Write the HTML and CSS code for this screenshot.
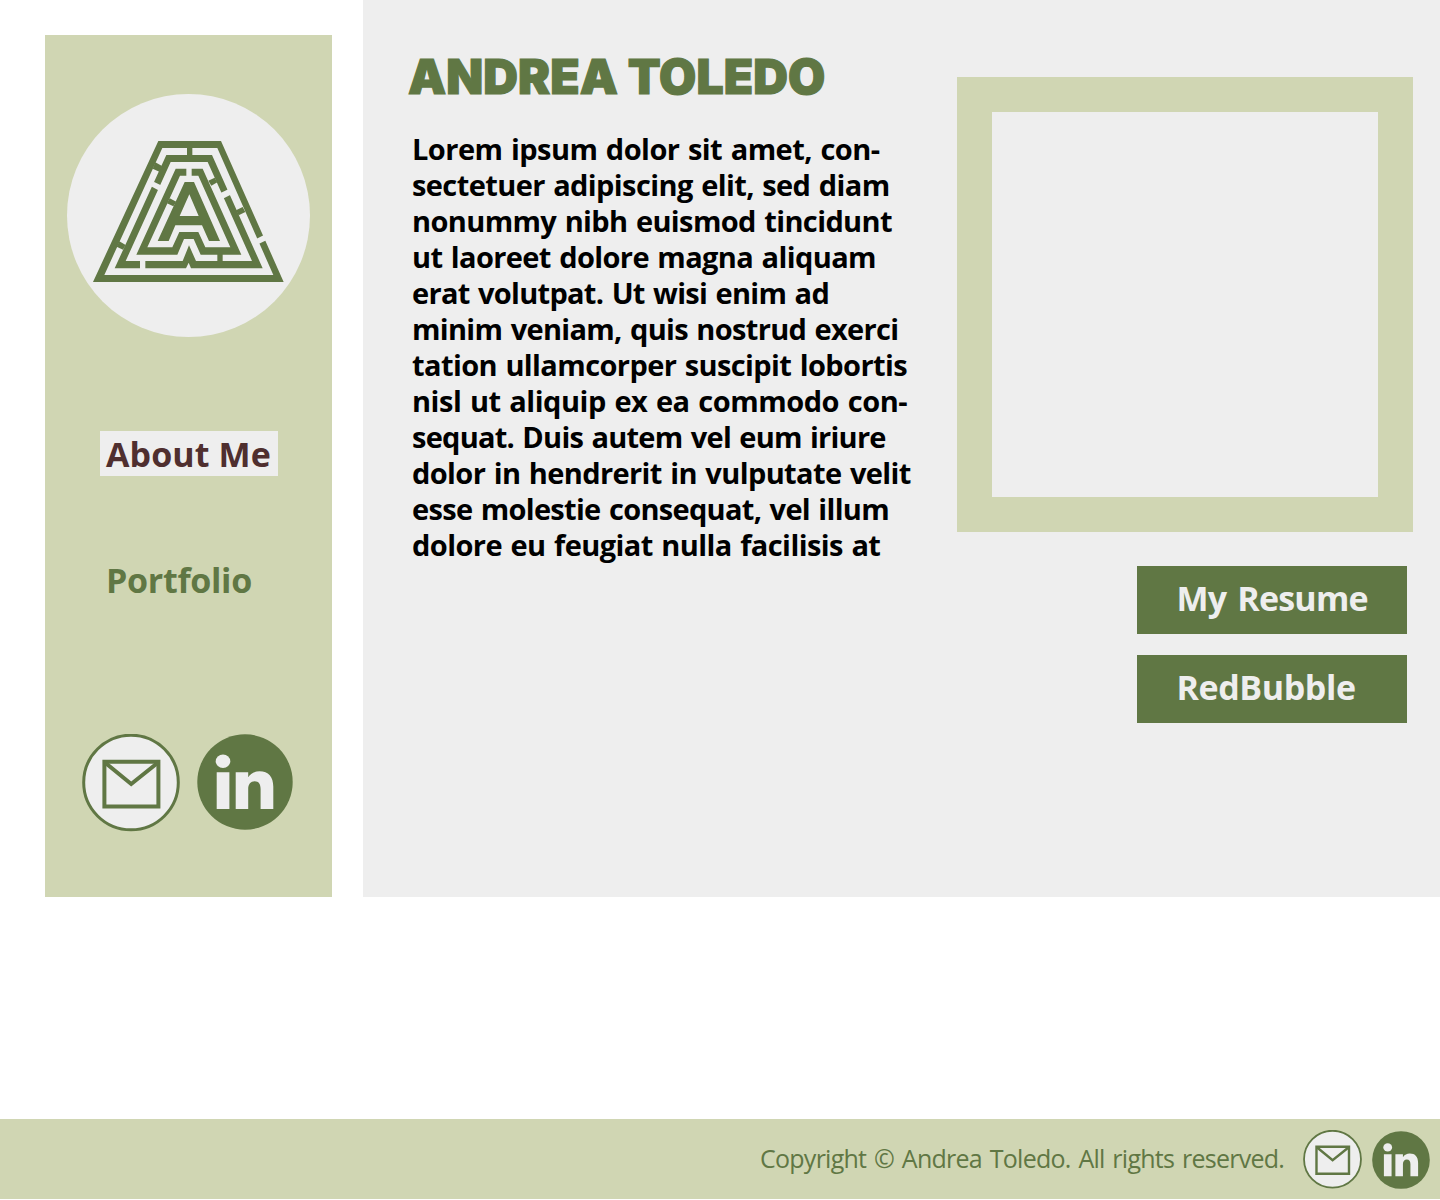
FILE: index.html
```html
<!DOCTYPE html>
<html lang="en">
<head>
<meta charset="utf-8">
<title>Andrea Toledo</title>
<link rel="stylesheet" href="styles.css">
</head>
<body>
<svg class="defs" aria-hidden="true">
  <symbol id="mail" viewBox="0 0 98 98">
    <circle cx="49" cy="48.500" r="47.300" fill="#eee" stroke="#607744" stroke-width="3"/>
    <path d="M22.400 27.700h54v44.900h-54z" fill="none" stroke="#607744" stroke-width="4"/>
    <path d="M23.500 29 49.200 50 75.500 29" fill="none" stroke="#607744" stroke-width="4"/>
  </symbol>
  <symbol id="linkedin" viewBox="0 0 96 96">
    <circle cx="48" cy="48" r="47.700" fill="#607744"/>
    <ellipse cx="26" cy="27.200" rx="7.300" ry="6.800" fill="#eee"/>
    <path d="M19.700 38.300h12.700V75H19.700zM38.700 38.300h12.500v5c2.500-4 6.500-6 11.300-6 9 0 13.800 5.500 13.800 15.500V75H63.600V55c0-5-2-7.700-5.900-7.700-4 0-6.500 3-6.500 7.500V75H38.700z" fill="#eee"/>
  </symbol>
</svg>
<div class="page">
  <aside class="sidebar">
    <div class="logo">
      <svg class="maze" viewBox="0 0 606 480">
        <g fill="#607744" fill-rule="evenodd">
          <path d="M211 33H399L587 456H15zM223 54H388L556 435H49z"/>
          <path d="M235 75H372L524 415H309L302 398 294 415H80zM248 96H359L492 393H324L303 346 284 393H113z"/>
          <path d="M263 116H344L460 374H338L317 327H288L268 374H145zM276 137H331L427 352H352L331 306H274L253 352H178z"/>
          <path d="M290 156H318L396 333H363L342 286H262L242 333H209zM304 193 332 258H275z"/>
          <path d="M297 50h16v28h-16zM388 370h16v27h-16zM202 97 222 108 214 125 194 116zM361 152 380 143 388 157 370 167zM245 205 265 215 256 229 237 220zM94 334 113 345 105 359 86 350zM444 241 464 231 472 246 452 256z"/>
        </g>
        <path fill="#eee" d="M295 113h16v26h-16zM156 391h16v26h-16zM197 155 222 167 214 182 189 169zM396 190 421 178 428 194 403 207zM503 328 528 315 535 331 510 343z"/>
      </svg>
    </div>
    <nav class="nav">
      <a class="nav-link active"><span class="about">About Me</span></a>
      <a class="nav-link"><span class="portfolio">Portfolio</span></a>
    </nav>
    <div class="social">
      <svg class="mail"><use href="#mail"/></svg>
      <svg class="linkedin"><use href="#linkedin"/></svg>
    </div>
  </aside>
  <main class="main">
    <section class="intro">
      <h1><span>ANDREA TOLEDO</span></h1>
      <p class="bio"><span class="l1">Lorem ipsum dolor sit amet, con-</span><br><span class="l2">sectetuer adipiscing elit, sed diam</span><br><span class="l3">nonummy nibh euismod tincidunt</span><br><span class="l4">ut laoreet dolore magna aliquam</span><br><span class="l5">erat volutpat. Ut wisi enim ad</span><br><span class="l6">minim veniam, quis nostrud exerci</span><br><span class="l7">tation ullamcorper suscipit lobortis</span><br><span class="l8">nisl ut aliquip ex ea commodo con-</span><br><span class="l9">sequat. Duis autem vel eum iriure</span><br><span class="l10">dolor in hendrerit in vulputate velit</span><br><span class="l11">esse molestie consequat, vel illum</span><br><span class="l12">dolore eu feugiat nulla facilisis at</span></p>
    </section>
    <section class="side">
      <div class="frame"></div>
      <a class="button"><span class="resume">My Resume</span></a>
      <a class="button"><span class="redbubble">RedBubble</span></a>
    </section>
  </main>
</div>
<footer class="footer">
  <span class="copy">Copyright © Andrea Toledo. All rights reserved.</span>
  <svg class="mail"><use href="#mail"/></svg>
  <svg class="linkedin"><use href="#linkedin"/></svg>
</footer>
</body>
</html>
```
FILE: styles.css
```css
* { box-sizing: border-box; }
body { margin: 0; height: 1200px; background: #fff; font-family: "Open Sans", "Noto Sans", sans-serif; overflow: hidden; }
svg { display: block; }
.defs { display: none; }
.page { display: flex; height: 897px; }
.sidebar { width: 287px; margin: 35.4px 31px 0 45px; background: #d0d6b3; display: flex; flex-direction: column; }
.logo { width: 243px; height: 243px; margin: 58.6px 0 0 22px; border-radius: 50%; background: #eee; padding: 36px 0 0 21px; }
.maze { width: 202px; height: 160px; }
.nav { display: flex; flex-direction: column; align-items: flex-start; margin: 94px 0 0 55px; gap: 81px; }
.nav-link { height: 45px; padding: 0 6px; font-size: 34px; font-weight: 700; line-height: 46px; color: #607744; white-space: nowrap; }
.active { width: 178px; background: #eee; color: #4f2f2f; }
.about { letter-spacing: 0.1px; }
.portfolio { letter-spacing: -0.3px; }
.social { display: flex; margin: 132px 0 0 37px; gap: 18px; }
.social .mail { width: 98px; height: 98px; }
.social .linkedin { width: 96px; height: 96px; margin-left: -0.8px; }
.main { width: 1077px; background: #eee; display: flex; justify-content: space-between; }
.intro { width: 560px; padding: 47px 0 0 45px; }
h1 { margin: 0; font: 900 48px/60px Inter, sans-serif; letter-spacing: 0.1px; color: #607744; -webkit-text-stroke: 1.2px #607744; stroke-linejoin: round; white-space: nowrap; }
.bio { margin: 24px 0 0 4px; font-size: 29px; font-weight: 700; line-height: 36px; word-spacing: 1.5px; color: #000; white-space: nowrap; }
.l1 { letter-spacing: -0.54px; }
.l2 { letter-spacing: -0.6px; }
.l3 { letter-spacing: -0.62px; }
.l4 { letter-spacing: -0.62px; }
.l5 { letter-spacing: -0.7px; }
.l6 { letter-spacing: -0.68px; }
.l7 { letter-spacing: -0.6px; }
.l8 { letter-spacing: -0.46px; }
.l9 { letter-spacing: -0.75px; }
.l10 { letter-spacing: -0.61px; }
.l11 { letter-spacing: -0.69px; }
.l12 { letter-spacing: -0.57px; }
.side { width: 456px; margin: 77px 27px 0 0; display: flex; flex-direction: column; align-items: flex-end; }
.frame { width: 456px; height: 455px; border: 35px solid #d0d6b3; margin-bottom: 34px; }
.button { width: 270px; height: 68px; margin: 0 6px 21px 0; padding-left: 39.5px; background: #607744; color: #eee; font-size: 34px; font-weight: 700; line-height: 65px; white-space: nowrap; }
.resume { letter-spacing: -0.8px; word-spacing: 3px; }
.redbubble { letter-spacing: -0.4px; }
.footer { height: 80px; margin-top: 222px; padding-right: 10px; background: #d0d6b3; display: flex; align-items: center; justify-content: flex-end; }
.copy { width: 543px; margin-bottom: 2px; font-size: 25px; letter-spacing: -0.74px; word-spacing: 2px; color: #607744; white-space: nowrap; }
.footer .mail { width: 59px; height: 59px; }
.footer .linkedin { width: 58px; height: 58px; margin: 2px 0 0 10px; }
```
